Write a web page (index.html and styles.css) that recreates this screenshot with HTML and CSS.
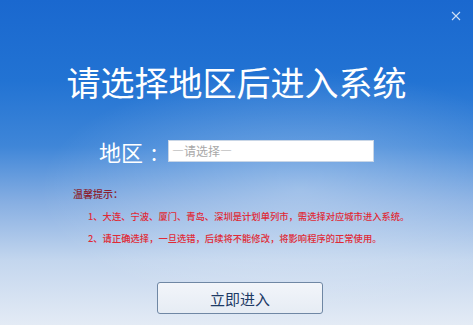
FILE: index.html
```html
<!DOCTYPE html>
<html lang="zh">
<head>
<meta charset="utf-8">
<link rel="stylesheet" href="styles.css">
</head>
<body>
<div class="win">
  <div class="close">
    <svg width="10" height="10" viewBox="0 0 10 10"><path d="M1 1L9 9M9 1L1 9" stroke="#cfe0f5" stroke-width="1.1" fill="none"/></svg>
  </div>
  <h1 class="title">请选择地区后进入系统</h1>
  <div class="field">
    <span class="label">地区<span class="colon">:</span></span>
    <div class="select">—请选择—</div>
  </div>
  <div class="tips">
    <div class="tips-head">温馨提示：</div>
    <div class="tip">1、大连、宁波、厦门、青岛、深圳是计划单列市，需选择对应城市进入系统。</div>
    <div class="tip">2、请正确选择，一旦选错，后续将不能修改，将影响程序的正常使用。</div>
  </div>
  <div class="actions">
    <button class="btn">立即进入</button>
  </div>
</div>
</body>
</html>
```
FILE: styles.css
```css
html, body {
  margin: 0;
  padding: 0;
}
body {
  width: 473px;
  height: 325px;
  overflow: hidden;
  font-family: "Noto Sans CJK SC", "Microsoft YaHei", sans-serif;
}
.win {
  position: relative;
  width: 473px;
  height: 325px;
  box-sizing: border-box;
  padding-top: 58px;
  background:
    radial-gradient(ellipse 260px 120px at 300px 190px, rgba(255,255,255,0.30), rgba(255,255,255,0) 100%),
    linear-gradient(to bottom, #1a68cf 0%, #2273d3 25%, #3f86d8 45%, #86aee2 62%, #c3d6ee 80%, #e4ebf5 100%);
}
.close {
  position: absolute;
  top: 11px;
  right: 12px;
  width: 10px;
  height: 10px;
  display: flex;
}
.title {
  margin: 0;
  text-align: center;
  color: #fff;
  font-weight: 400;
  font-size: 34px;
  line-height: 48px;
}
.field {
  display: flex;
  align-items: center;
  margin-top: 34px;
  padding-left: 99px;
  height: 22px;
}
.label {
  color: #fff;
  font-size: 22px;
  line-height: 22px;
  width: 69px;
}
.colon {
  margin-left: 8px;
}
.select {
  width: 206px;
  height: 22px;
  box-sizing: border-box;
  background: #fff;
  border: 1px solid #c9d6e6;
  color: #a8a8a8;
  font-size: 12px;
  line-height: 20px;
  padding-left: 3px;
}
.tips {
  margin-top: 25px;
  padding-left: 73px;
}
.tips-head {
  color: #8a1f30;
  font-size: 10px;
  line-height: 14px;
  font-weight: 500;
}
.tip {
  color: #e02a36;
  font-size: 9.3px;
  line-height: 14px;
  margin-top: 8px;
  padding-left: 15px;
  font-weight: 500;
}
.actions {
  display: flex;
  justify-content: center;
  margin-top: 37px;
  padding-left: 7px;
}
.btn {
  width: 166px;
  height: 32px;
  border: 1px solid #6f87a4;
  border-radius: 3px;
  background: linear-gradient(to bottom, #f2f5fa, #e6ecf4);
  color: #1d3a66;
  font-family: "Noto Sans CJK SC", sans-serif;
  font-size: 15px;
  padding: 0;
}
```
